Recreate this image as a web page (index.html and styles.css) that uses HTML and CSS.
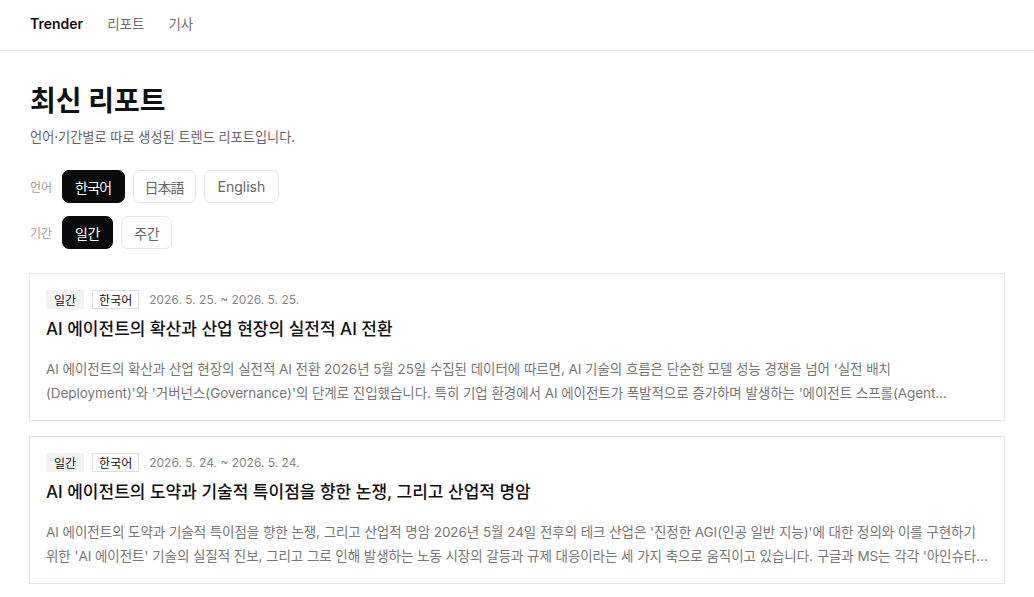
FILE: index.html
```html
<!DOCTYPE html>
<html lang="ko">
<head>
<meta charset="utf-8">
<title>Trender</title>
<link rel="stylesheet" href="styles.css">
</head>
<body>
<header class="nav">
  <a class="brand" href="#">Trender</a>
  <a class="nav-link" href="#">리포트</a>
  <a class="nav-link" href="#">기사</a>
</header>
<main class="main">
  <h1 class="title">최신 리포트</h1>
  <p class="subtitle">언어·기간별로 따로 생성된 트렌드 리포트입니다.</p>
  <div class="filters">
    <div class="filter-row">
      <span class="filter-label">언어</span>
      <button class="chip chip-ko active">한국어</button>
      <button class="chip chip-ja">日本語</button>
      <button class="chip chip-en">English</button>
    </div>
    <div class="filter-row">
      <span class="filter-label">기간</span>
      <button class="chip chip-ko2 active">일간</button>
      <button class="chip chip-ko2">주간</button>
    </div>
  </div>
  <div class="list">
    <article class="card">
      <div class="meta">
        <span class="badge badge-gray">일간</span>
        <span class="badge badge-outline">한국어</span>
        <span class="date">2026. 5. 25. ~ 2026. 5. 25.</span>
      </div>
      <h2 class="card-title">AI 에이전트의 확산과 산업 현장의 실전적 AI 전환</h2>
      <p class="card-desc">AI 에이전트의 확산과 산업 현장의 실전적 AI 전환 2026년 5월 25일 수집된 데이터에 따르면, AI 기술의 흐름은 단순한 모델 성능 경쟁을 넘어 '실전 배치(Deployment)'와 '거버넌스(Governance)'의 단계로 진입했습니다. 특히 기업 환경에서 AI 에이전트가 폭발적으로 증가하며 발생하는 '에이전트 스프롤(Agent Sprawl)' 현상이 새로운 과제로 떠오르고 있습니다.</p>
    </article>
    <article class="card">
      <div class="meta">
        <span class="badge badge-gray">일간</span>
        <span class="badge badge-outline">한국어</span>
        <span class="date">2026. 5. 24. ~ 2026. 5. 24.</span>
      </div>
      <h2 class="card-title">AI 에이전트의 도약과 기술적 특이점을 향한 논쟁, 그리고 산업적 명암</h2>
      <p class="card-desc">AI 에이전트의 도약과 기술적 특이점을 향한 논쟁, 그리고 산업적 명암 2026년 5월 24일 전후의 테크 산업은 '진정한 AGI(인공 일반 지능)'에 대한 정의와 이를 구현하기 위한 'AI 에이전트' 기술의 실질적 진보, 그리고 그로 인해 발생하는 노동 시장의 갈등과 규제 대응이라는 세 가지 축으로 움직이고 있습니다. 구글과 MS는 각각 '아인슈타인 테스트'와 같은 새로운 기준을 제시하고 있습니다.</p>
    </article>
  </div>
</main>
</body>
</html>
```

FILE: styles.css
```css
* { box-sizing: border-box; }
html, body { margin: 0; padding: 0; background: #fff; }
body {
  font-family: Inter, "Noto Sans CJK KR", sans-serif;
  color: #111;
}
.nav {
  height: 51px;
  display: flex;
  align-items: center;
  gap: 24px;
  padding: 0 30px 4px;
  border-bottom: 1px solid #e5e5e5;
}
.nav a { text-decoration: none; font-size: 14px; }
.brand { color: #111; font-weight: 600; }
.nav-link { color: #707070; font-size: 13.5px !important; }
.main { padding: 32px 29px 30px; }
.title {
  margin: 0 0 0 1px;
  font-size: 28px;
  line-height: 36px;
  font-weight: 700;
}
.subtitle {
  margin: 8px 0 0 1px;
  font-size: 13.2px;
  line-height: 20px;
  color: #666;
}
.filters { margin-top: 23px; display: flex; flex-direction: column; gap: 13px; padding-left: 1px; }
.filter-row { display: flex; align-items: center; gap: 8px; }
.filter-label { font-size: 12px; color: #a0a0a0; width: 24px; }
.chip {
  font-family: inherit;
  height: 33px;
  padding: 0 12px;
  font-size: 14px;
  border: 1px solid #e5e5e5;
  border-radius: 7px;
  background: #fff;
  color: #666;
  cursor: pointer;
}
.chip-ko { letter-spacing: -0.7px; }
.chip-ko2 { letter-spacing: -0.3px; }
.chip-ja { padding: 0 11px; letter-spacing: -1px; }
.chip-en { padding: 0 13px; }
.chip.active { background: #0a0a0a; border-color: #0a0a0a; color: #fff; }
.list { margin-top: 24px; display: flex; flex-direction: column; gap: 15px; }
.card {
  border: 1px solid #e5e5e5;
  padding: 16px 16px 15px;
}
.meta { display: flex; align-items: center; gap: 8px; }
.badge {
  height: 19px;
  display: inline-flex;
  align-items: center;
  padding: 0 7px;
  font-size: 12px;
  border: 1px solid transparent;
  color: #111;
}
.badge-gray { background: #f2f2f2; border-color: #f2f2f2; }
.badge-outline { border-color: #e0e0e0; padding: 0 6px; }
.date { font-size: 12px; color: #888; margin-left: 2px; }
.card-title {
  margin: 7px 0 0;
  font-size: 17px;
  line-height: 26px;
  font-weight: 500;
}
.card-desc {
  margin: 15px 0 0;
  font-size: 13.5px;
  line-height: 24px;
  letter-spacing: -0.06px;
  color: #777;
  display: -webkit-box;
  -webkit-line-clamp: 2;
  -webkit-box-orient: vertical;
  overflow: hidden;
}
```
